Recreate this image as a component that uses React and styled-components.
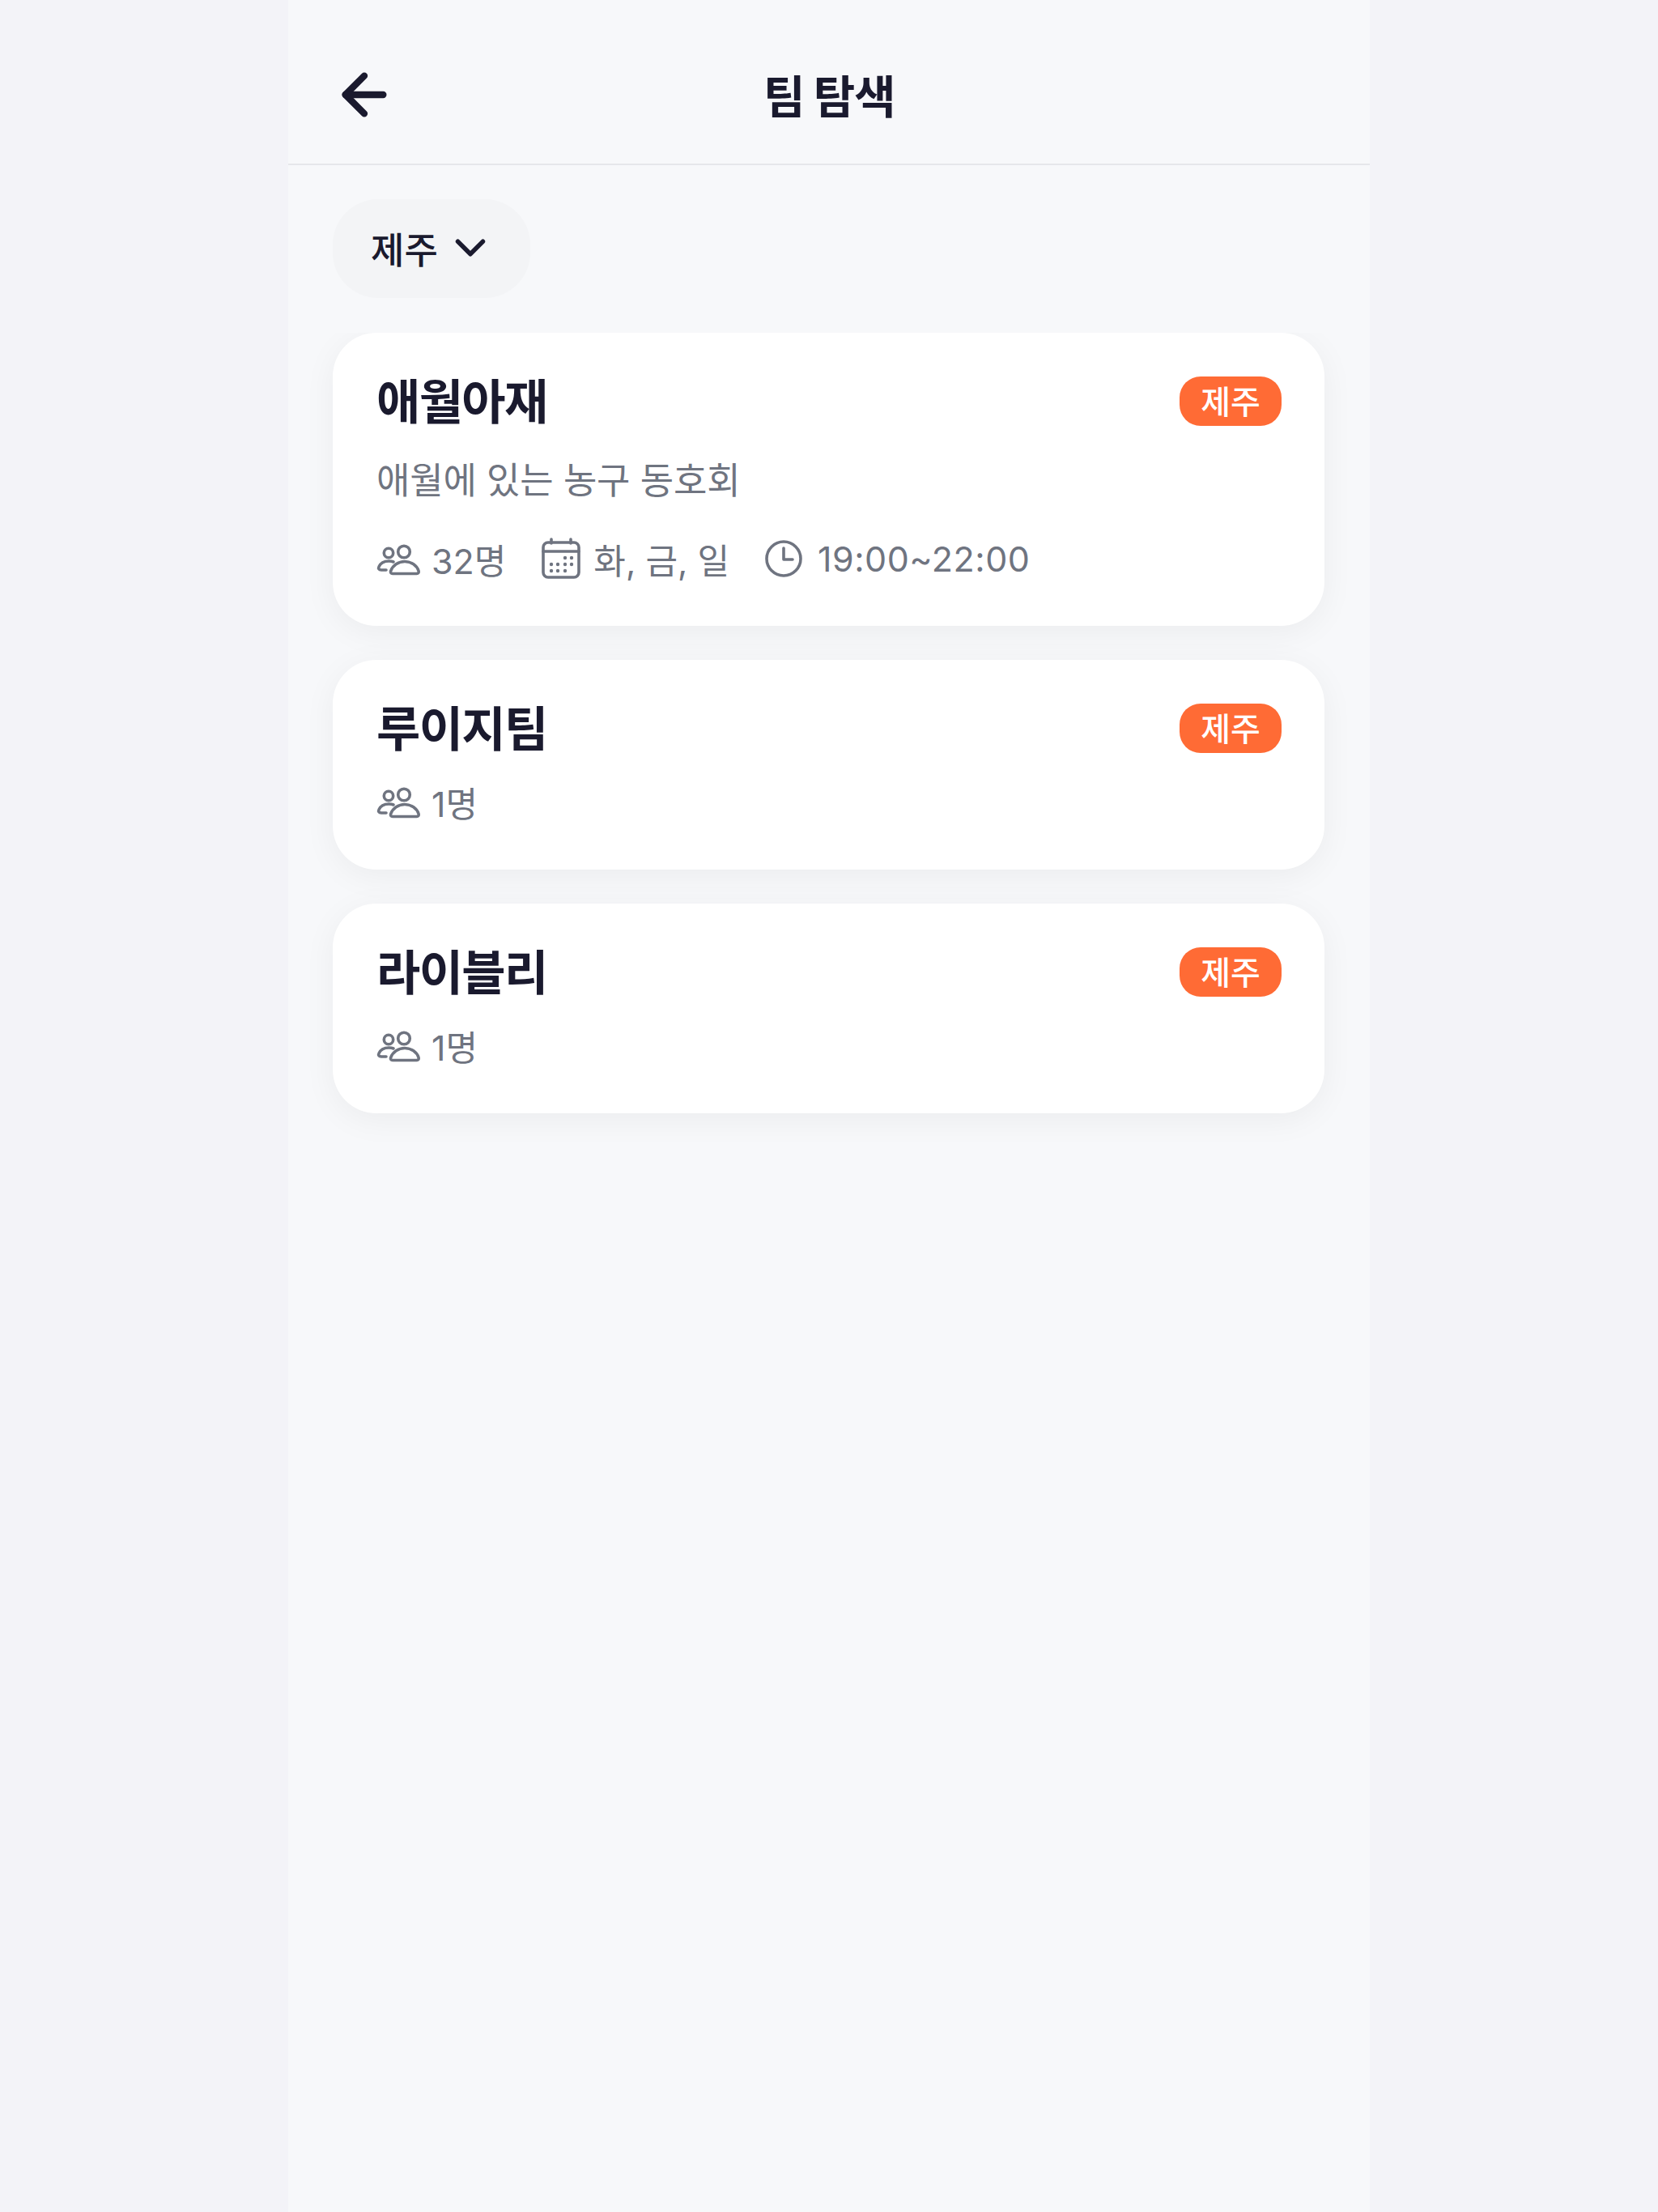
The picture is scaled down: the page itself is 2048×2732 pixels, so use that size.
import React from "react";
import styled, { createGlobalStyle } from "styled-components";
import { ArrowLeft, ChevronDown } from "lucide-react";

const GlobalStyle = createGlobalStyle`
  html, body {
    margin: 0;
    padding: 0;
    background: #f3f3f8;
    font-family: "Inter", "Noto Sans CJK KR", sans-serif;
  }
`;

const teams = [
  {
    name: "애월아재",
    region: "제주",
    description: "애월에 있는 농구 동호회",
    members: "32명",
    days: "화, 금, 일",
    time: "19:00~22:00",
  },
  { name: "루이지팀", region: "제주", members: "1명" },
  { name: "라이블리", region: "제주", members: "1명" },
];

const UsersIcon = () => (
  <MetaSvg width="52" height="40" viewBox="-1 -2 52 38">
    <circle cx="14" cy="10" r="5.700" />
    <circle cx="33" cy="8.500" r="7.300" />
    <path d="M11 31H5c-3 0-4-2-3-4 2-4.500 7-7 12.500-7 2 0 4 .3 5.500 1" />
    <path d="M19 35.500c-2 0-3-1.500-2.200-3.500C19 25.500 26 20.500 34 20.500s15 5 17 11.500c.6 2-.4 3.500-2.300 3.500z" />
  </MetaSvg>
);

const CalendarIcon = () => (
  <MetaSvg width="48" height="50" viewBox="0 0 48 50">
    <rect x="2" y="5" width="44" height="43" rx="6" />
    <path d="M2 16h44M12 1v5M36 1v5" />
    <g fill="#6f7480" stroke="none">
      <circle cx="29" cy="24" r="2.200" />
      <circle cx="37" cy="24" r="2.200" />
      <circle cx="12" cy="32" r="2.200" />
      <circle cx="20" cy="32" r="2.200" />
      <circle cx="29" cy="32" r="2.200" />
      <circle cx="37" cy="32" r="2.200" />
      <circle cx="12" cy="40" r="2.200" />
      <circle cx="20" cy="40" r="2.200" />
      <circle cx="29" cy="40" r="2.200" />
    </g>
  </MetaSvg>
);

const ClockIcon = () => (
  <MetaSvg width="46" height="46" viewBox="0 0 46 46">
    <circle cx="23" cy="23" r="21" />
    <path d="M23 10v14h11" />
  </MetaSvg>
);

const App = () => {
  return (
    <>
      <GlobalStyle />
      <Screen>
        <Header>
          <BackButton>
            <ArrowLeft size={80} strokeWidth={2.5} />
          </BackButton>
          <Title>팀 탐색</Title>
        </Header>

        <FilterBar>
          <RegionPill>
            제주
            <ChevronDown size={62} strokeWidth={2.1} />
          </RegionPill>
        </FilterBar>

        <TeamList>
          {teams.map((team) => (
            <TeamCard key={team.name} $compact={!team.description}>
              <CardTop>
                <TeamName>{team.name}</TeamName>
                <RegionBadge>{team.region}</RegionBadge>
              </CardTop>
              {team.description && <Description>{team.description}</Description>}
              <MetaRow $compact={!team.description}>
                <MetaItem>
                  <UsersIcon />
                  {team.members}
                </MetaItem>
                {team.days && (
                  <MetaItem>
                    <CalendarIcon />
                    {team.days}
                  </MetaItem>
                )}
                {team.time && (
                  <MetaItem $wide>
                    <ClockIcon />
                    {team.time}
                  </MetaItem>
                )}
              </MetaRow>
            </TeamCard>
          ))}
        </TeamList>
      </Screen>
    </>
  );
};

const Screen = styled.div`
  width: 1336px;
  height: 2732px;
  margin: 0 auto;
  background: #f7f8fa;
  overflow: hidden;
`;

const Header = styled.header`
  height: 204px;
  display: flex;
  align-items: center;
  justify-content: center;
  position: relative;
  border-bottom: 2px solid #e6e7ea;
  box-sizing: border-box;
  padding-top: 28px;
`;

const BackButton = styled.div`
  position: absolute;
  left: 54px;
  top: 77px;
  display: flex;
  color: #1a1a2e;
`;

const Title = styled.h1`
  margin: 0;
  font-size: 56px;
  font-weight: 700;
  letter-spacing: -1.4px;
  color: #1a1a2e;
`;

const FilterBar = styled.div`
  padding: 42px 55px 43px;
  display: flex;
`;

const RegionPill = styled.div`
  height: 122px;
  width: 244px;
  box-sizing: border-box;
  padding: 0 0 2px 47px;
  border-radius: 56px;
  background: #f3f4f6;
  display: flex;
  align-items: center;
  gap: 9px;
  font-size: 45px;
  font-weight: 500;
  color: #1a1a2e;
`;

const TeamList = styled.div`
  padding: 0 56px 80px 55px;
  display: flex;
  flex-direction: column;
  gap: 42px;
  overflow: hidden;
`;

const TeamCard = styled.article`
  background: #ffffff;
  border-radius: 54px;
  padding: 54px 53px ${(props) => (props.$compact ? "56px" : "55px")} 54px;
  box-shadow: 0 8px 40px rgba(0, 0, 0, 0.05);
`;

const CardTop = styled.div`
  display: flex;
  align-items: center;
  justify-content: space-between;
  height: 61px;
`;

const TeamName = styled.h2`
  margin: 0 0 6px;
  font-size: 59px;
  font-weight: 700;
  letter-spacing: -1.6px;
  color: #1a1a2e;
`;

const RegionBadge = styled.span`
  width: 126px;
  height: 61px;
  padding-bottom: 4px;
  box-sizing: border-box;
  border-radius: 26px;
  background: #ff6b35;
  color: #ffffff;
  font-size: 40px;
  font-weight: 500;
  display: flex;
  align-items: center;
  justify-content: center;
`;

const Description = styled.p`
  margin: 38px 0 0;
  height: 60px;
  line-height: 60px;
  font-size: 45px;
  font-weight: 400;
  letter-spacing: -0.2px;
  color: #6f7480;
`;

const MetaRow = styled.div`
  margin-top: ${(props) => (props.$compact ? "32px" : "38px")};
  height: 56px;
  display: flex;
  align-items: center;
  gap: 44px;
`;

const MetaItem = styled.div`
  display: flex;
  align-items: center;
  gap: ${(props) => (props.$wide ? "19px" : "16px")};
  font-size: 43px;
  font-weight: 400;
  letter-spacing: ${(props) => (props.$wide ? "0.5px" : "0")};
  color: #6f7480;
`;

const MetaSvg = styled.svg`
  fill: none;
  stroke: #6f7480;
  stroke-width: 3.6;
  stroke-linecap: round;
  stroke-linejoin: round;
  flex-shrink: 0;
  overflow: visible;
`;

export default App;
